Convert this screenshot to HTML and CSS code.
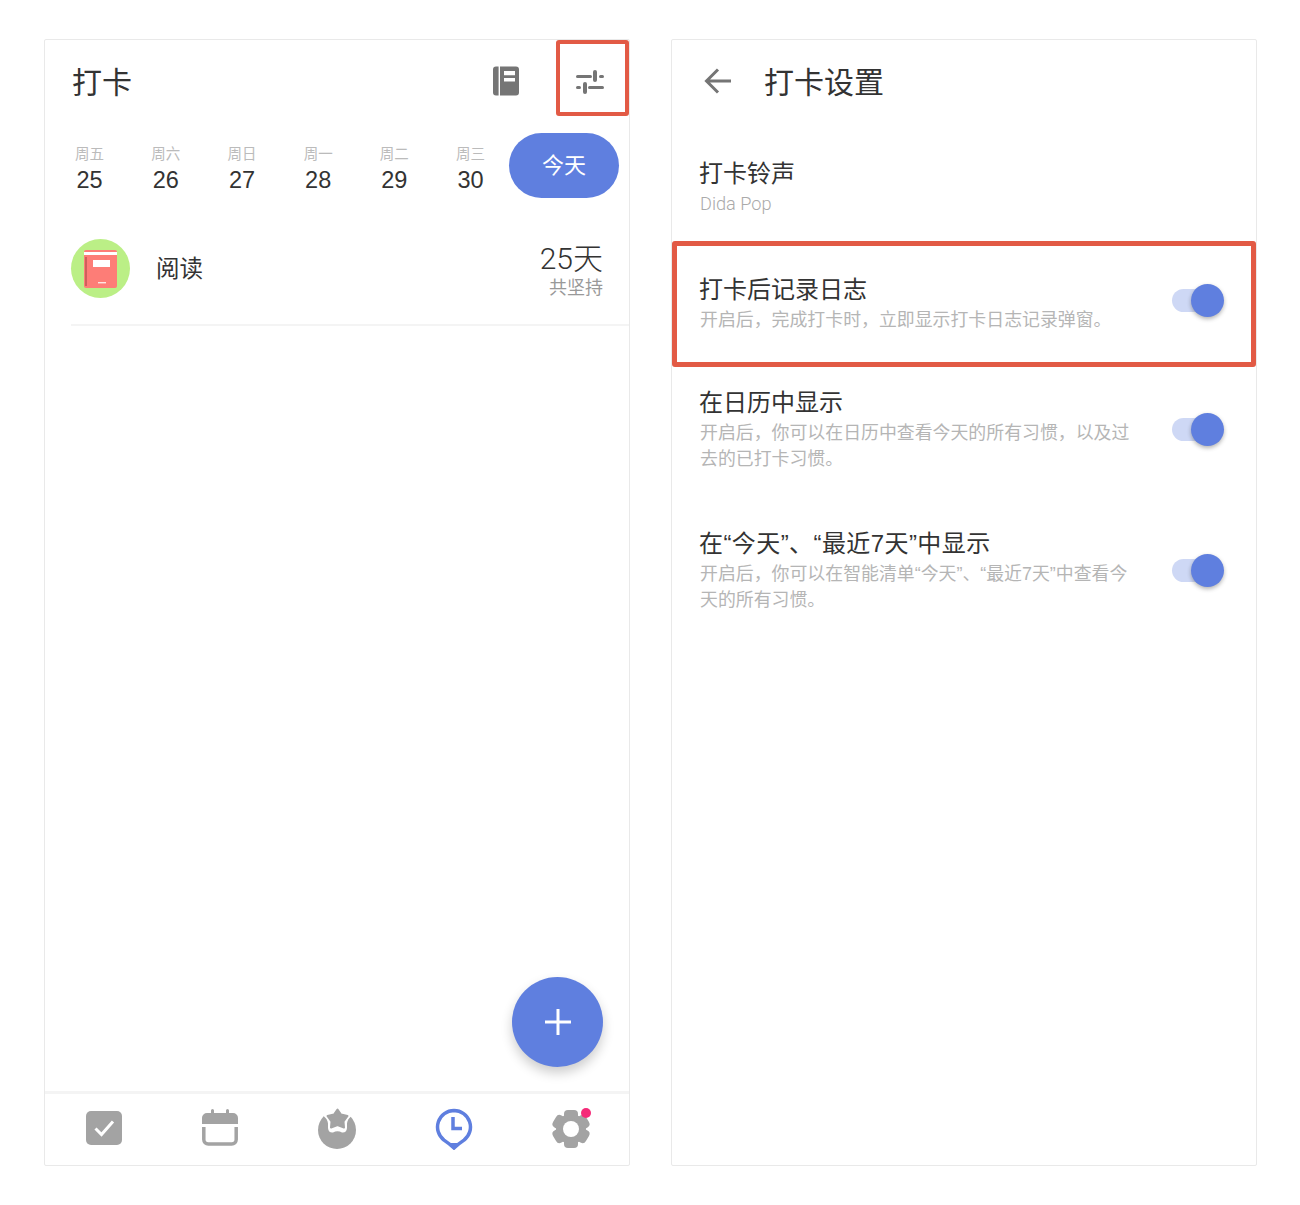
FILE: index.html
```html
<!DOCTYPE html>
<html lang="zh-CN">
<head>
<meta charset="utf-8">
<title>打卡设置</title>
<link rel="stylesheet" href="styles.css">
</head>
<body>
<main class="page">
  <section class="panel">
    <header class="head">
      <h1 class="title">打卡</h1>
      <svg class="book" width="26" height="30" viewBox="0 0 26 30"><path fill="#757575" d="M3 0.5h2.6v29H3a3 3 0 0 1-3-3v-23a3 3 0 0 1 3-3zM7 .5h16a3 3 0 0 1 3 3v23a3 3 0 0 1-3 3H7zM11 5v4.2h11V5zM11 12v3.6h11V12z"/></svg>
      <div class="head-action">
        <svg class="sliders" width="30" height="24" viewBox="0 0 30 24"><g fill="#757575"><rect x="1" y="5" width="16" height="3" rx="1.5"/><rect x="24" y="5" width="5" height="3" rx="1.5"/><rect x="18" y="0" width="4" height="12" rx="2"/><rect x="1" y="16" width="5" height="3" rx="1.5"/><rect x="13" y="16" width="16" height="3" rx="1.5"/><rect x="8" y="12" width="4" height="12" rx="2"/></g></svg>
        <span class="mark"></span>
      </div>
    </header>
    <div class="week">
      <div class="day"><span class="dow">周五</span><span class="num">25</span></div>
      <div class="day"><span class="dow">周六</span><span class="num">26</span></div>
      <div class="day"><span class="dow">周日</span><span class="num">27</span></div>
      <div class="day"><span class="dow">周一</span><span class="num">28</span></div>
      <div class="day"><span class="dow">周二</span><span class="num">29</span></div>
      <div class="day"><span class="dow">周三</span><span class="num">30</span></div>
      <div class="today">今天</div>
    </div>
    <div class="habit">
      <div class="avatar">
        <svg width="34" height="38" viewBox="0 0 34 38"><rect x="0" y="0" width="33" height="38" rx="2" fill="#fd7d77"/><rect x="0" y="2" width="33" height="3" fill="#fff"/><rect x="1" y="7" width="2" height="29" fill="#cf605c"/><rect x="9" y="10" width="17" height="7" fill="#fff"/><rect x="14" y="32" width="8" height="1.4" fill="#fff" opacity=".8"/></svg>
      </div>
      <div class="habit-name">阅读</div>
      <div class="habit-stat"><div class="stat-num">25天</div><div class="stat-label">共坚持</div></div>
    </div>
    <div class="spacer"></div>
    <button class="fab" type="button" aria-label="添加"><svg width="28" height="28" viewBox="0 0 28 28"><path d="M14 1v26M1 14h26" stroke="#fff" stroke-width="3"/></svg></button>
    <nav class="tabs">
      <div class="tab"><svg class="tab-shift tab-check" width="38" height="36" viewBox="0 0 38 36"><rect x="1" y="1" width="36" height="34" rx="5" fill="#a3a3a3"/><path d="M10.500 18.500l6 6L28 11.500" fill="none" stroke="#fff" stroke-width="3"/></svg></div>
      <div class="tab"><svg class="tab-shift" width="38" height="38" viewBox="0 0 38 38"><path fill="#a3a3a3" d="M6 4h4V1.500a1 1 0 0 1 3 0V4h12V1.500a1 1 0 0 1 3 0V4h4a5 5 0 0 1 5 5v6H1V9a5 5 0 0 1 5-5z"/><path fill="none" stroke="#a3a3a3" stroke-width="3.500" d="M2.800 18v12.500a4.500 4.500 0 0 0 4.500 4.500h23.400a4.500 4.500 0 0 0 4.500-4.500V18"/></svg></div>
      <div class="tab"><svg width="40" height="42" viewBox="0 0 40 42"><circle cx="20" cy="22" r="19" fill="#a3a3a3"/><path fill="#fff" d="M7 0v8.500q3.500 2.500 4 7V20q.5 5 5 4.500 4.500-2.500 9 0 4.500.5 5-4.500v-4.500q.5-4.500 4-7V0z"/><path fill="#a3a3a3" stroke="#a3a3a3" stroke-width="2" stroke-linejoin="round" d="M20.500 1.500L24 6.500 30.500 8 26.500 13.500 27 19.500 20.500 17 14 19.500 14.500 13.500 10.500 8 17 6.500z"/></svg></div>
      <div class="tab"><svg width="38" height="42" viewBox="0 0 38 42"><path fill="none" stroke="#5f7fdf" stroke-width="3.500" d="M19 2.500a16.500 16.500 0 0 1 10 29.600q-6 4-10 7.900q-4-3.900-10-7.900A16.500 16.500 0 0 1 19 2.500z"/><path fill="#5f7fdf" d="M13 35h12l-6 6.500z"/><path fill="none" stroke="#5f7fdf" stroke-width="3.500" d="M18 9v11.500h9"/></svg></div>
      <div class="tab"><svg width="40" height="40" viewBox="0 0 40 40"><g fill="#a3a3a3"><circle cx="20" cy="20" r="15"/><rect x="13" y="1" width="14" height="38" rx="4"/><rect x="13" y="1" width="14" height="38" rx="4" transform="rotate(60 20 20)"/><rect x="13" y="1" width="14" height="38" rx="4" transform="rotate(120 20 20)"/></g><circle cx="20" cy="20" r="8" fill="#fff"/></svg><span class="dot"></span></div>
    </nav>
  </section>

  <section class="panel">
    <header class="head head-settings">
      <svg class="back" width="28" height="26" viewBox="0 0 28 26"><path fill="none" stroke="#757575" stroke-width="3" d="M27 13H3M14 1.500L2.500 13 14 24.500"/></svg>
      <h1 class="title">打卡设置</h1>
    </header>
    <div class="rows">
      <div class="row row-first">
        <div class="row-text"><div class="row-title">打卡铃声</div><div class="row-value">Dida Pop</div></div>
      </div>
      <div class="row row-marked">
        <div class="row-text"><div class="row-title">打卡后记录日志</div><div class="row-sub">开启后，完成打卡时，立即显示打卡日志记录弹窗。</div></div>
        <span class="toggle toggle-high"></span>
        <span class="mark mark-row"></span>
      </div>
      <div class="row">
        <div class="row-text"><div class="row-title">在日历中显示</div><div class="row-sub">开启后，你可以在日历中查看今天的所有习惯，以及过去的已打卡习惯。</div></div>
        <span class="toggle"></span>
      </div>
      <div class="row row-last">
        <div class="row-text"><div class="row-title row-title-wide">在“今天”、“最近7天”中显示</div><div class="row-sub">开启后，你可以在智能清单“今天”、“最近7天”中查看今天的所有习惯。</div></div>
        <span class="toggle"></span>
      </div>
    </div>
  </section>
</main>
</body>
</html>
```
FILE: styles.css
```css
* { box-sizing: border-box; }
html, body { margin: 0; padding: 0; background: #fff; }
body { font-family: "Liberation Sans", "Noto Sans CJK SC", sans-serif; color: #333; }
.page { display: flex; gap: 41px; padding: 39px 0 39px 44px; }
.panel { position: relative; display: flex; flex-direction: column; width: 586px; height: 1127px; border: 1px solid #e9e9e9; border-radius: 2px; background: #fff; }
.head { display: flex; align-items: center; height: 76px; padding-left: 27px; }
.title { margin: 0; padding-top: 10px; font-size: 30px; font-weight: 400; line-height: 40px; color: #333; flex: 1; }
.book { margin: 6px 37px 0 0; }
.head-action { position: relative; display: flex; align-items: center; justify-content: center; width: 73px; height: 76px; }
.sliders { margin: 8px 6px 0 0; }
.mark { position: absolute; inset: 0; border: 4px solid #e25a45; border-radius: 3px; }

.week { display: flex; align-items: center; height: 65px; margin-top: 17px; padding-left: 6.500px; }
.day { display: flex; flex-direction: column; align-items: center; width: 76.2px; padding-top: 8px; }
.dow { font-size: 14.500px; line-height: 20px; color: #bbb; }
.num { font-size: 23.500px; line-height: 30px; color: #333; margin-top: 1px; }
.today { display: flex; align-items: center; justify-content: center; flex: none; width: 110px; height: 65px; margin-left: .500px; border-radius: 33px; background: #5f7fdf; color: #fff; font-size: 22px; padding-bottom: 6px; }

.habit { display: flex; align-items: center; margin: 39px 0 0 26px; padding: 0 26px 24px 0; border-bottom: 2px solid #f4f4f4; }
.avatar { display: flex; align-items: center; justify-content: center; width: 59px; height: 59px; border-radius: 50%; background: #bbef86; }
.habit-name { flex: 1; margin-left: 26px; font-size: 23.500px; line-height: 32px; color: #333; }
.habit-stat { margin-top: 5px; text-align: right; }
.stat-num { font-family: Roboto, "Noto Sans CJK SC", sans-serif; font-weight: 300; font-size: 30px; line-height: 34px; color: #333; }
.stat-label { font-size: 18px; line-height: 24px; color: #999; }

.spacer { flex: 1; }
.fab { position: absolute; left: 467px; top: 937px; display: flex; align-items: center; justify-content: center; width: 91px; height: 90px; padding: 0; border: 0; border-radius: 50%; background: #5f7fdf; box-shadow: 0 6px 12px rgba(0, 0, 0, .2); }
.tabs { display: flex; height: 74px; padding-bottom: 2px; border-top: 3px solid #f4f4f4; }
.tab { position: relative; flex: 1; display: flex; align-items: center; justify-content: center; }
.tab-shift { margin-bottom: 2px; }
.tab-check { margin-left: 2px; }
.dot { position: absolute; left: 69px; top: 14px; width: 10px; height: 10px; border-radius: 50%; background: #f52a78; }

.head-settings { gap: 32px; padding-left: 32px; }
.back { flex: none; margin-top: 6px; }
.rows { display: flex; flex-direction: column; padding-top: 4px; }
.row { position: relative; display: flex; align-items: center; padding: 27px 32px 27px 27px; }
.row-first { padding-top: 37px; padding-bottom: 28px; align-items: flex-start; }
.row-marked { padding-top: 28px; padding-bottom: 26px; }
.row-last { margin-top: 1px; }
.row-text { flex: 1; max-width: 436px; margin-right: auto; }
.row-title { font-size: 24px; line-height: 34px; color: #333; }
.row-title-wide { letter-spacing: .42px; }
.row-sub { padding-left: 1px; font-size: 17.900px; line-height: 26px; color: #b5b5b5; }
.row-value { padding-left: 1px; font-family: Roboto, sans-serif; font-weight: 300; font-size: 18.200px; line-height: 26px; color: #aaa; }
.toggle { position: relative; flex: none; display: block; width: 52px; height: 33px; }
.toggle::before { content: ""; position: absolute; left: 0; right: 9px; top: 5px; height: 23px; border-radius: 12px; background: #ced8f5; }
.toggle::after { content: ""; position: absolute; right: 0; top: 0; width: 33px; height: 33px; border-radius: 50%; background: #5f7fdf; box-shadow: 0 2px 4px rgba(0, 0, 0, .3); }
.toggle-high { margin-bottom: 6px; }
.mark-row { inset: -4px 0 -8px 0; border-width: 5px; }
```
